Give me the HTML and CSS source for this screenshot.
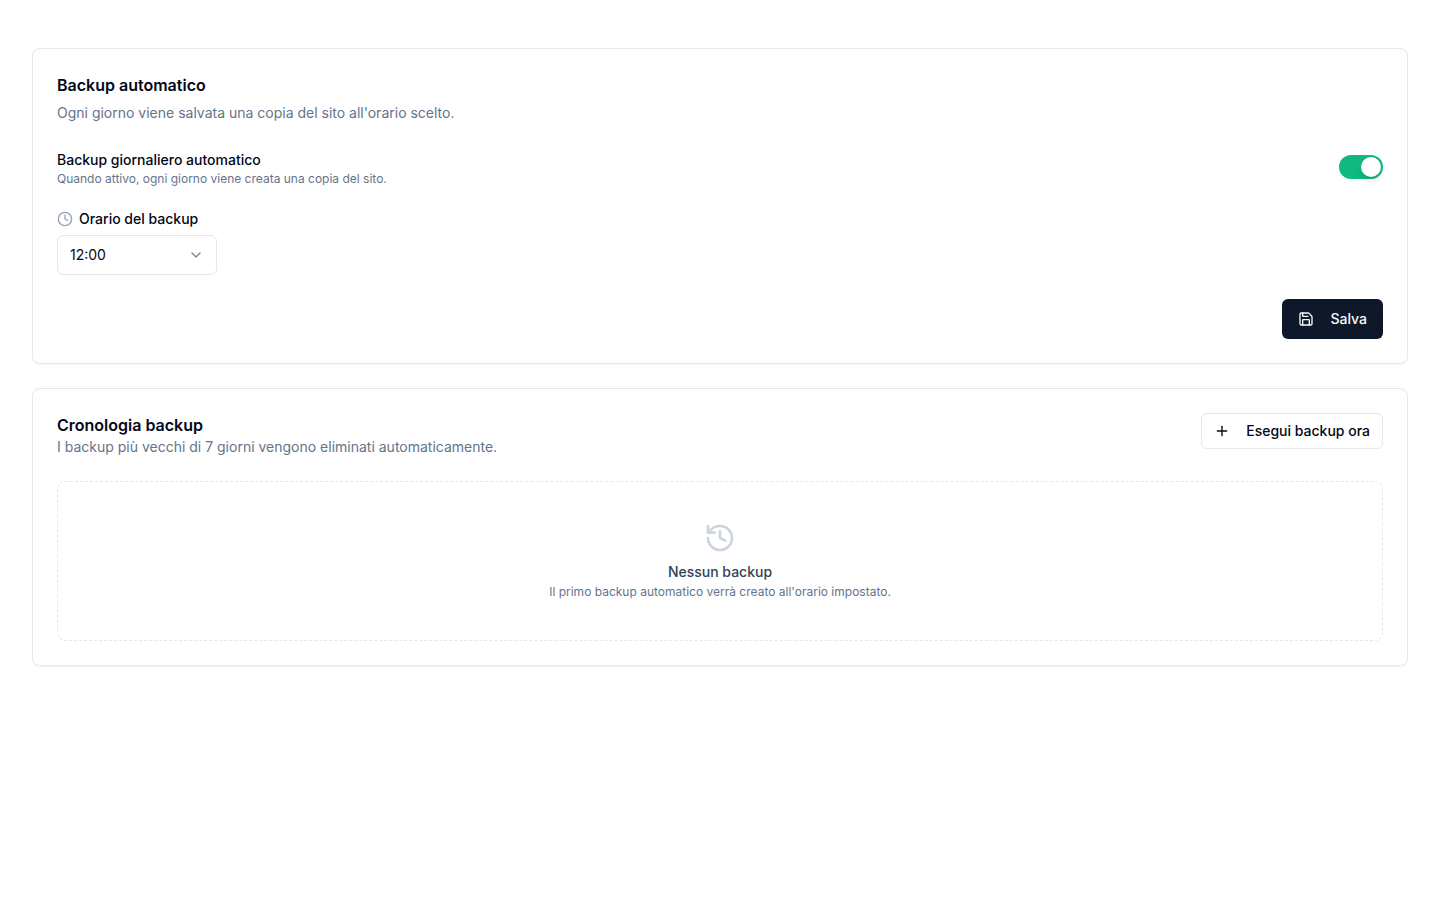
FILE: index.html
```html
<!DOCTYPE html>
<html lang="it">
<head>
    <meta charset="UTF-8">
    <meta name="viewport" content="width=device-width, initial-scale=1.0">
    <title>Backup</title>
    <link rel="stylesheet" href="styles.css">
</head>
<body>
    <main class="page">
        <form class="card">
            <div class="card-header">
                <h2>Backup automatico</h2>
                <p class="description">Ogni giorno viene salvata una copia del sito all'orario scelto.</p>
            </div>

            <div class="setting">
                <div>
                    <label class="label" for="autoBackup">Backup giornaliero automatico</label>
                    <p class="hint">Quando attivo, ogni giorno viene creata una copia del sito.</p>
                </div>
                <input type="checkbox" role="switch" class="switch" id="autoBackup" checked>
            </div>

            <div class="field">
                <label class="label label-icon" for="backupTime">
                    <svg class="icon icon-muted" viewBox="0 0 24 24" aria-hidden="true">
                        <circle cx="12" cy="12" r="10"/>
                        <path d="M12 6v6l4 2"/>
                    </svg>
                    Orario del backup
                </label>
                <div class="select">
                    <select id="backupTime">
                        <option>00:00</option>
                        <option>06:00</option>
                        <option selected>12:00</option>
                        <option>18:00</option>
                    </select>
                    <svg class="icon chevron" viewBox="0 0 24 24" aria-hidden="true">
                        <path d="m6 9 6 6 6-6"/>
                    </svg>
                </div>
            </div>

            <div class="actions">
                <button type="button" class="button primary">
                    <svg class="icon" viewBox="0 0 24 24" aria-hidden="true">
                        <path d="M15.2 3a2 2 0 0 1 1.4.6l3.8 3.8a2 2 0 0 1 .6 1.4V19a2 2 0 0 1-2 2H5a2 2 0 0 1-2-2V5a2 2 0 0 1 2-2z"/>
                        <path d="M17 21v-7a1 1 0 0 0-1-1H8a1 1 0 0 0-1 1v7"/>
                        <path d="M7 3v4a1 1 0 0 0 1 1h7"/>
                    </svg>
                    Salva
                </button>
            </div>
        </form>

        <section class="card">
            <div class="history-header">
                <div>
                    <h2>Cronologia backup</h2>
                    <p class="description">I backup più vecchi di 7 giorni vengono eliminati automaticamente.</p>
                </div>
                <button type="button" class="button outline">
                    <svg class="icon" viewBox="0 0 24 24" aria-hidden="true">
                        <path d="M5 12h14"/>
                        <path d="M12 5v14"/>
                    </svg>
                    Esegui backup ora
                </button>
            </div>

            <div class="empty">
                <svg class="icon empty-icon" viewBox="0 0 24 24" aria-hidden="true">
                    <path d="M3 12a9 9 0 1 0 9-9 9.75 9.75 0 0 0-6.74 2.74L3 8"/>
                    <path d="M3 3v5h5"/>
                    <path d="M12 7v5l4 2"/>
                </svg>
                <p class="empty-title">Nessun backup</p>
                <p class="hint">Il primo backup automatico verrà creato all'orario impostato.</p>
            </div>
        </section>
    </main>
</body>
</html>
```

FILE: styles.css
```css
* {
    margin: 0;
    padding: 0;
    box-sizing: border-box;
}

body {
    background: #fff;
    color: #020817;
    font-family: 'Inter', sans-serif;
    font-size: 16px;
    line-height: 24px;
}

.page {
    display: flex;
    flex-direction: column;
    gap: 24px;
    padding: 48px 32px;
}

.card {
    display: flex;
    flex-direction: column;
    gap: 24px;
    padding: 24px;
    border: 1px solid #e2e8f0;
    border-radius: 8px;
    background: #fff;
    box-shadow: 0 1px 2px rgba(0, 0, 0, 0.05);
}

.card-header {
    display: flex;
    flex-direction: column;
    gap: 6px;
}

h2 {
    font-size: 16px;
    font-weight: 600;
}

.description {
    font-size: 14px;
    line-height: 20px;
    color: #64748b;
}

.hint {
    font-size: 12px;
    line-height: 16px;
    color: #64748b;
}

.label {
    font-size: 14px;
    font-weight: 500;
    line-height: 16px;
}

.icon {
    flex-shrink: 0;
    width: 16px;
    height: 16px;
    fill: none;
    stroke: currentColor;
    stroke-width: 2;
    stroke-linecap: round;
    stroke-linejoin: round;
}

.icon-muted {
    color: #94a3b8;
}

.setting {
    display: flex;
    align-items: center;
    justify-content: space-between;
    gap: 16px;
}

.switch {
    appearance: none;
    display: flex;
    flex-shrink: 0;
    width: 44px;
    height: 24px;
    padding: 2px;
    border-radius: 12px;
    background: #e2e8f0;
    cursor: pointer;
}

.switch::before {
    content: '';
    width: 20px;
    height: 20px;
    border-radius: 50%;
    background: #fff;
    box-shadow: 0 4px 6px rgba(0, 0, 0, 0.1);
}

.switch:checked {
    justify-content: flex-end;
    background: #10b981;
}

.field {
    display: flex;
    flex-direction: column;
    align-items: flex-start;
    gap: 8px;
}

.label-icon {
    display: flex;
    align-items: center;
    gap: 6px;
}

.select {
    display: grid;
    align-items: center;
    width: 160px;
}

.select select {
    grid-area: 1 / 1;
    appearance: none;
    width: 100%;
    height: 40px;
    padding: 0 36px 0 12px;
    border: 1px solid #e2e8f0;
    border-radius: 6px;
    background: #fff;
    color: inherit;
    font: inherit;
    font-size: 14px;
}

/* the arrow shares the grid cell with the select */
.chevron {
    grid-area: 1 / 1;
    justify-self: end;
    margin-right: 13px;
    opacity: 0.5;
    pointer-events: none;
}

.actions {
    display: flex;
    justify-content: flex-end;
}

.button {
    display: inline-flex;
    align-items: center;
    flex-shrink: 0;
    gap: 16px;
    border: none;
    border-radius: 6px;
    font-family: inherit;
    font-size: 14px;
    font-weight: 500;
    line-height: 20px;
    cursor: pointer;
}

.primary {
    height: 40px;
    padding: 0 16px;
    background: #0f172a;
    color: #f8fafc;
}

.primary:hover {
    background: #1e293b;
}

.outline {
    height: 36px;
    padding: 0 12px;
    border: 1px solid #e2e8f0;
    background: #fff;
    color: #020817;
}

.outline:hover {
    background: #f1f5f9;
}

.history-header {
    display: flex;
    align-items: flex-start;
    justify-content: space-between;
    gap: 16px;
}

.empty {
    display: flex;
    flex-direction: column;
    align-items: center;
    padding: 40px 24px;
    border: 1px dashed #e2e8f0;
    border-radius: 8px;
    text-align: center;
}

.empty-icon {
    width: 32px;
    height: 32px;
    margin-bottom: 8px;
    color: #cbd5e1;
}

.empty-title {
    margin-bottom: 2px;
    font-size: 14px;
    font-weight: 500;
    line-height: 20px;
    color: #334155;
}
```
